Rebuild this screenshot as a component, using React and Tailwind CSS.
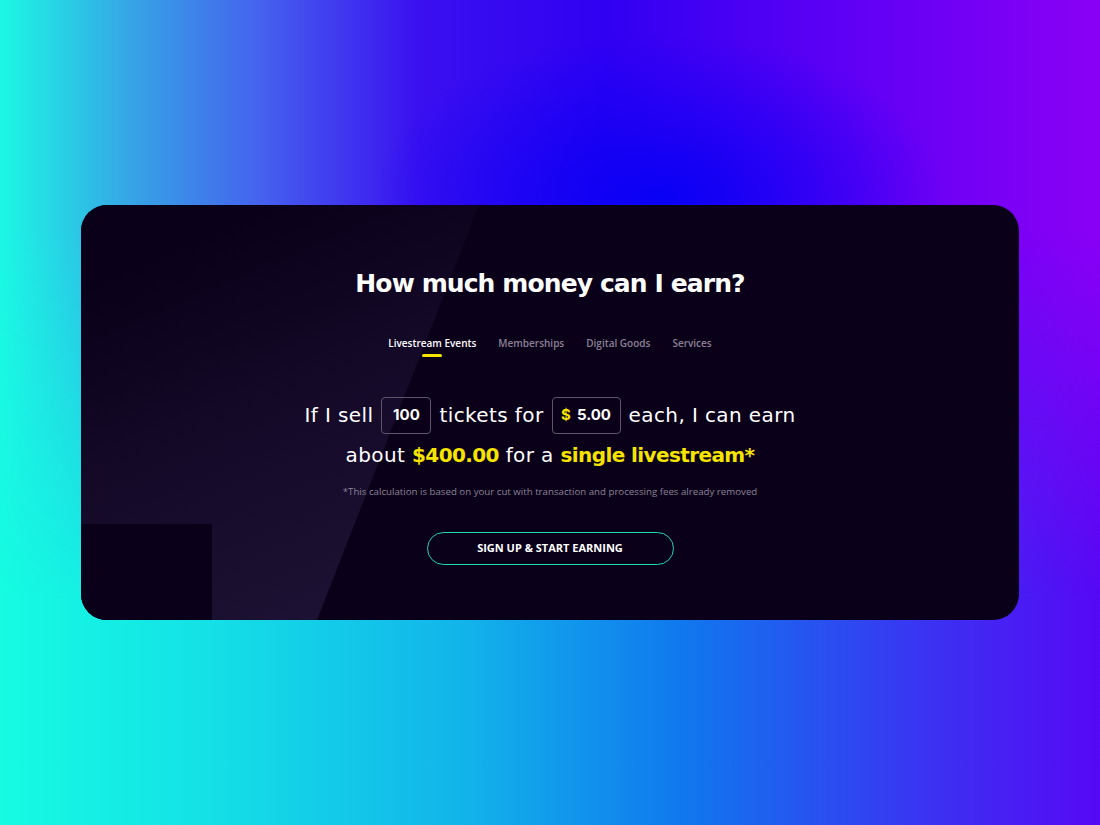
export default function App() {
  const wide = { fontFamily: '"DejaVu Sans", "Liberation Sans", sans-serif' };
  const sans = { fontFamily: '"Open Sans", "Noto Sans", sans-serif' };
  return (
    <div className="relative min-h-[825px] w-full overflow-hidden bg-[linear-gradient(90deg,#16fbe2_0%,#14e2e6_18%,#12b4ea_42%,#1078ee_62%,#3a34f2_84%,#5608f5_100%)]">
      <div className="absolute inset-0 bg-[radial-gradient(ellipse_26%_20%_at_60%_24%,#0800f5_0%,rgba(8,0,245,0)_100%),linear-gradient(90deg,#1cf8e4_0%,#36a4e6_12%,#4560ee_24%,#3a10f0_38%,#3000f2_55%,#6000f5_78%,#8a00f5_100%)] [mask-image:linear-gradient(180deg,#000_0%,#000_28%,transparent_72%)]" />
      <div className="relative flex min-h-[825px] items-center justify-center">
        <div className="relative h-[415px] w-[938px] overflow-hidden rounded-[26px] bg-[#0b0019]">
          <svg className="absolute inset-0" width="938" height="415" viewBox="0 0 938 415">
            <defs>
              <linearGradient id="lg" x1="100" y1="40" x2="260" y2="415" gradientUnits="userSpaceOnUse">
                <stop offset="0" stopColor="#0b0019" />
                <stop offset="0.45" stopColor="#140927" />
                <stop offset="1" stopColor="#1e1234" />
              </linearGradient>
            </defs>
            <polygon points="0,0 398,0 236,415 0,415" fill="url(#lg)" />
            <rect x="0" y="319" width="131" height="96" fill="#0b0019" />
          </svg>
          <div className="relative flex flex-col items-center pt-[62px]">
            <h1 className="text-[25px] font-bold leading-[34px] tracking-[-0.9px] text-white" style={wide}>
              How much money can I earn?
            </h1>
            <div className="mt-[35px] flex gap-[22px] text-[10px] font-semibold leading-[14px]" style={sans}>
              <div className="flex flex-col items-center">
                <span className="text-white">Livestream Events</span>
                <span className="mt-[4px] h-[3px] w-[20px] rounded-full bg-[#f5e400]" />
              </div>
              <span className="text-[#8a8095]">Memberships</span>
              <span className="text-[#8a8095]">Digital Goods</span>
              <span className="text-[#8a8095]">Services</span>
            </div>
            <div className="mt-[38px] flex h-[40px] items-center text-[20px] tracking-[0.4px] text-white" style={wide}>
              <span>If I sell</span>
              <span className="mx-[8px] flex h-[37px] w-[50px] items-center justify-center rounded-[4px] border border-[#5e5668] text-[15px] font-bold tracking-normal" style={{ fontFamily: 'Inter, sans-serif' }}>
                100
              </span>
              <span>tickets for</span>
              <span className="mx-[8px] flex h-[37px] w-[69px] items-center justify-center gap-[6px] rounded-[4px] border border-[#5e5668] text-[15px] font-bold tracking-normal" style={{ fontFamily: 'Inter, sans-serif' }}>
                <span className="text-[#f5e400]">$</span>
                <span>5.00</span>
              </span>
              <span>each, I can earn</span>
            </div>
            <div className="flex h-[40px] items-center text-[20px] tracking-[0.4px] text-white" style={wide}>
              <span>about&nbsp;</span>
              <span className="font-bold tracking-[-0.6px] text-[#f5e400]">$400.00</span>
              <span>&nbsp;for a&nbsp;</span>
              <span className="font-bold tracking-[-0.6px] text-[#f5e400]">single livestream*</span>
            </div>
            <p className="mt-[10px] text-[9.7px] leading-[14px] text-[#8b8296]" style={sans}>
              *This calculation is based on your cut with transaction and processing fees already removed
            </p>
            <button className="mt-[33px] flex h-[33px] w-[247px] items-center justify-center rounded-full border-[1.5px] border-[#1fd6b0] text-[11px] font-bold text-white" style={sans}>
              SIGN UP &amp; START EARNING
            </button>
          </div>
        </div>
      </div>
    </div>
  );
}
